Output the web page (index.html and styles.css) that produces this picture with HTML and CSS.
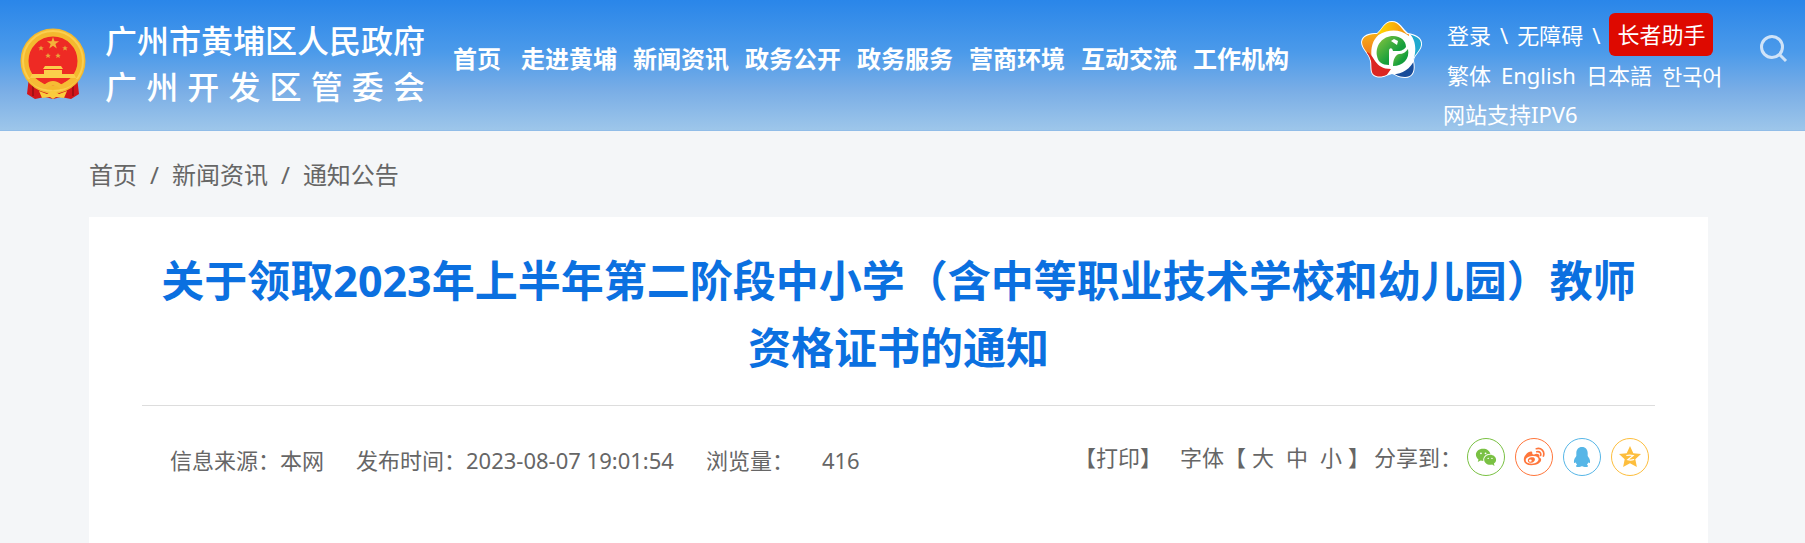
FILE: index.html
```html
<!DOCTYPE html>
<html lang="zh-CN">
<head>
<meta charset="utf-8">
<meta name="viewport" content="width=device-width, initial-scale=1">
<title>关于领取2023年上半年第二阶段中小学（含中等职业技术学校和幼儿园）教师资格证书的通知</title>
<link rel="stylesheet" href="styles.css">
</head>
<body>
<header class="header">
  <a class="brand" href="#">
    <svg class="emblem" viewBox="0 0 66 72" aria-hidden="true">
      <path d="M9 49 L7 66 L15 71 L25 69 L33 71 L41 69 L51 71 L59 66 L57 49Z" fill="#d3151b"/>
      <path d="M13 53v15M53 53v15" stroke="#a50f14" stroke-width="2"/>
      <circle cx="33" cy="33" r="28.500" fill="#ee2a24" stroke="#f4b92f" stroke-width="8"/>
      <circle cx="33" cy="33" r="30" fill="none" stroke="#fbcf4f" stroke-width="2"/>
      <path d="M33 9l1.500 4.300h4.600l-3.700 2.700 1.400 4.400-3.800-2.700-3.800 2.700 1.400-4.400-3.700-2.700h4.600z" fill="#f3b23a"/>
      <path d="M21 17.500l.8 1.800 2 .1-1.500 1.200.6 2-1.900-1.100-1.800 1.100.6-2-1.600-1.200 2-.1zM45 17.500l.8 1.800 2 .1-1.500 1.200.6 2-1.900-1.100-1.800 1.100.6-2-1.600-1.200 2-.1zM28 25l.8 1.800 2 .1-1.500 1.200.6 2-1.900-1.100-1.800 1.100.6-2-1.600-1.200 2-.1zM38 25l.8 1.800 2 .1-1.500 1.200.6 2-1.900-1.100-1.800 1.100.6-2-1.600-1.200 2-.1z" fill="#e9a53a"/>
      <path d="M25 38h16l2 3H23zM24 42h18v4H24zM12 46h42l2 4H10z" fill="#fbce4b"/>
      <path d="M8 51Q18 50 24 57Q33 49 42 57Q48 50 58 51Q51 60 41 61Q33 54 25 61Q15 60 8 51Z" fill="#f6bb35"/>
      <path d="M19 63l8 3 6-4 6 4 8-3-3 7-8-1-3 2-3-2-8 1z" fill="#fbcb3d"/>
    </svg>
    <span class="brand-names">
      <span class="brand-name">广州市黄埔区人民政府</span>
      <span class="brand-name">广州开发区管委会</span>
    </span>
  </a>
  <nav class="nav" aria-label="主导航">
    <a class="nav-home" href="#">首页</a>
    <a href="#">走进黄埔</a>
    <a href="#">新闻资讯</a>
    <a href="#">政务公开</a>
    <a href="#">政务服务</a>
    <a href="#">营商环境</a>
    <a href="#">互动交流</a>
    <a href="#">工作机构</a>
  </nav>
  <div class="tools">
    <svg class="flower" viewBox="0 0 62 58" aria-hidden="true">
      <defs>
        <linearGradient id="leaf" x1="0" y1="0" x2="1" y2="1"><stop offset="0" stop-color="#8cc63f"/><stop offset=".6" stop-color="#18a03c"/><stop offset="1" stop-color="#08943c"/></linearGradient>
        <linearGradient id="gold" x1="0" x2="1"><stop offset="0" stop-color="#ffd900"/><stop offset="1" stop-color="#f58a12"/></linearGradient>
        <linearGradient id="flame" x1="0" y1="0" x2="0" y2="1"><stop offset="0" stop-color="#f7b018"/><stop offset="1" stop-color="#ee6a1d"/></linearGradient>
        <clipPath id="petals"><path d="M31 1C38 1 41 9 46 13C53 14 61 17 60 24C59 31 52 34 52 40C54 49 52 56 44 56C37 56 35 53 31 52C26 53 22 57 15 55C9 53 11 46 10 40C9 33 1 28 1 21C2 14 10 13 16 13C21 9 23 1 31 1Z"/></clipPath>
      </defs>
      <path d="M31 0C39 0 42 8 47 12C54 13 62 16 61 24C60 31 53 34 53 40C55 49 53 57 44 57C37 57 35 54 31 53C26 54 22 58 15 56C8 54 10 46 9 40C8 33 0 28 0 21C1 13 9 12 16 12C21 8 23 0 31 0Z" fill="#fff"/>
      <g clip-path="url(#petals)">
        <path d="M17 14V0H48V15C38 8 29 8 17 14Z" fill="url(#gold)"/>
        <path d="M20 12H0V32L11 40C9 28 11 18 20 12Z" fill="url(#flame)"/>
        <path d="M6 31C14 34 13 48 30 48L23 58H5Z" fill="#dc2622"/>
        <path d="M47 11H62V32L52 40C56 29 55 18 47 11Z" fill="#20a9cf"/>
        <path d="M54 38V58H34L29 53C40 54 49 49 54 38Z" fill="#184c99"/>
      </g>
      <path d="M16 35C14 24 22 15 32 15C40 15 45 20 45 26C41 31 37 30 32 30C31 26 28 27 28 30V44C21 44 17 41 16 35Z" fill="url(#leaf)"/>
      <path d="M47 28C49 38 42 45 32 45C32 39 34 34 38 33C42 33 45 31 47 28Z" fill="url(#leaf)"/>
      <path d="M30 20l3-2 4 2-1 4-3-2z" fill="#fff"/>
    </svg>
    <div class="links">
      <div class="link-row">
        <a href="#">登录</a><span>\</span><a href="#">无障碍</a><span>\</span><a class="elder" href="#">长者助手</a>
      </div>
      <div class="link-row languages">
        <a href="#">繁体</a><a href="#">English</a><a href="#">日本語</a><a class="korean" lang="ko" href="#">한국어</a>
      </div>
      <p class="ipv6">网站支持IPV6</p>
    </div>
    <button class="search" type="button" aria-label="搜索">
      <svg viewBox="0 0 28 28"><circle cx="12" cy="12" r="10.500"/><path d="M19.500 19.500L26 26"/></svg>
    </button>
  </div>
</header>
<div class="page">
  <nav class="crumbs" aria-label="当前位置">
    <a href="#">首页</a><span>/</span><a href="#">新闻资讯</a><span>/</span><a href="#">通知公告</a>
  </nav>
  <main class="card">
    <h1 class="title">关于领取2023年上半年第二阶段中小学（含中等职业技术学校和幼儿园）教师资格证书的通知</h1>
    <div class="meta">
      <div class="facts">
        <span>信息来源：本网</span>
        <span>发布时间：2023-08-07 19:01:54</span>
        <span class="views">浏览量：<span>416</span></span>
      </div>
      <div class="actions">
        <button class="text-button print" type="button">【打印】</button>
        <div class="sizes"><span>字体【</span><div class="size-options"><button type="button">大</button><button type="button">中</button><button type="button">小</button></div><span>】</span></div>
        <span>分享到：</span>
        <div class="share">
          <a class="wechat" href="#" aria-label="微信"><svg viewBox="0 0 24 24"><path d="M9 3C4 3 1 6 1 9.600c0 2 1.100 3.800 2.800 5L3 17.500l3.200-1.600c1 .3 1.900.4 2.900.4C8.500 12 11.500 8.600 16.800 8.500 16 5.300 13 3 9 3z"/><path d="M23 15c0-3-2.900-5.500-6.500-5.500S10 12 10 15s2.900 5.500 6.500 5.500c.8 0 1.500-.1 2.200-.3l2.600 1.500-.7-2.500C22.100 18.200 23 16.700 23 15z"/><g fill="#fff"><circle cx="6.500" cy="8" r="1"/><circle cx="11.500" cy="8" r="1"/><circle cx="14.400" cy="13.500" r=".8"/><circle cx="18.500" cy="13.500" r=".8"/></g></svg></a>
          <a class="weibo" href="#" aria-label="微博"><svg viewBox="0 0 24 24"><path d="M10 8C11 5 6 5.500 3 9.500C-1 14 .5 21 9 21C17 21 21 16.500 19.500 13.800C19 12.800 17.500 13 17.800 11.800C18.500 8.500 15 7.600 12.300 9.200C11 9.700 10.500 9.200 10 8ZM10 11c4.300-.5 7 1.200 7 3.500s-3 4.700-7.200 4.800c-4.300 0-6.800-1.500-6.800-3.700S5.500 11.500 10 11z" fill-rule="evenodd"/><path d="M9 12.300c-2.800.3-4.200 2.300-3.600 4.200.6 1.700 2.900 2.200 5 1.400 2-.8 3.100-2.600 2.500-4.100-.5-1.300-2-1.800-3.900-1.500zm-1.100 5a1.500 1.300 0 1 1 .2-2.600 1.500 1.300 0 0 1-.2 2.600z"/><path d="M14.500 3C20 1.500 24 6 22.300 11M15 6.300c3-.8 5 1.300 4.200 4" fill="none" stroke="currentColor" stroke-width="1.800" stroke-linecap="round"/></svg></a>
          <a class="qq" href="#" aria-label="QQ"><svg viewBox="0 0 24 24"><path d="M12 1C8 1 5.800 4 5.800 7.500V11C4.300 13 3 15.200 3.200 17.500c.1 1.500.9 1.500 2 .1.300 1.100.8 2 1.500 2.800-1.300.5-1.700 1.800-.7 2.300 1.400.6 4.600.3 6-.9 1.400 1.200 4.600 1.500 6 .9 1-.5.600-1.800-.7-2.300.7-.8 1.200-1.700 1.500-2.800 1.100 1.400 1.900 1.400 2-.1.200-2.300-1.100-4.500-2.600-6.500V7.500C18.200 4 16 1 12 1z"/></svg></a>
          <a class="qzone" href="#" aria-label="QQ空间"><svg viewBox="0 0 24 24"><path d="M12 0l3.600 7.800 8.400 1-6.200 5.700 1.700 8.400L12 18.800l-7.500 4.100 1.700-8.400L0 8.800l8.400-1z"/><path d="M8 10.300Q12 9.600 15.500 10.400L9.500 15Q13 15.800 16.500 14.800" fill="none" stroke="#fff" stroke-width="1.200"/></svg></a>
        </div>
      </div>
    </div>
  </main>
</div>
</body>
</html>
```
FILE: styles.css
```css
* { box-sizing: border-box; }

body {
  margin: 0;
  background: #f4f6f8;
  color: #666;
  font-family: "Noto Sans", "Noto Sans CJK SC", sans-serif;
  font-size: 22px;
  line-height: 32px;
}

a { color: inherit; text-decoration: none; }
button { border: 0; padding: 0; background: none; color: inherit; font: inherit; cursor: pointer; }
svg { display: block; }

.header {
  display: flex;
  min-height: 131px;
  padding-left: 20px;
  padding-right: 17px;
  border-bottom: 1px solid #91bde8;
  background: linear-gradient(#2a86e9, #4b9aea 40%, #7aaee6 70%, #9dc6ea);
  color: #fff;
  white-space: nowrap;
}

.brand { display: flex; align-items: flex-start; gap: 19px; padding-top: 18px; }
.emblem { width: 66px; height: 72px; margin-top: 10px; }
.brand-names { display: grid; }
.brand-name {
  font-size: 32px;
  font-weight: 500;
  line-height: 46px;
  text-align-last: justify;
}

.nav {
  display: flex;
  gap: 16px;
  margin-left: 28px;
  padding-top: 41px;
  font-size: 24px;
  font-weight: 700;
  line-height: 36px;
}
.nav-home { margin-right: 4px; }

.tools { display: flex; margin-left: auto; }
.flower { width: 62px; height: 58px; margin-top: 21px; }
.links { width: 292px; margin-left: 20px; padding-top: 13px; }
.link-row { display: flex; align-items: center; gap: 9px; padding-left: 4px; }
.elder { padding: 5px 8px 6px; border-radius: 6px; background: #de0900; }
.languages { gap: 10px; padding-top: 3px; }
.korean { font-family: "Noto Sans CJK KR", sans-serif; }
.ipv6 { margin: 0; padding-top: 7px; }
.search { align-self: flex-start; width: 28px; height: 28px; margin-top: 35px; margin-left: 25px; }
.search svg { width: 28px; height: 28px; fill: none; stroke: #cfe3f8; stroke-width: 3; }

.page { padding: 0 97px 0 89px; }
.crumbs { display: flex; gap: 13px; padding: 26px 0 24px; font-size: 24px; line-height: 36px; }

.card { min-height: 326px; padding: 30px 53px 0; background: #fff; }
.title {
  margin: 0;
  padding-bottom: 24px;
  border-bottom: 1px solid #ddd;
  color: #0b70e0;
  font-size: 43px;
  font-weight: 700;
  line-height: 67px;
  text-align: center;
}

.meta { display: flex; justify-content: space-between; padding: 32px 6px 0 28px; white-space: nowrap; }
.facts { display: flex; gap: 32px; padding-top: 6px; }
.views { display: flex; gap: 28px; }
.actions { display: flex; align-items: center; align-self: flex-start; }
.print { margin-right: 18px; }
.sizes { display: flex; gap: 6px; margin-right: 4px; }
.size-options { display: flex; gap: 12px; }
.share { display: flex; gap: 10px; margin-left: 5px; }
.share a { display: grid; place-items: center; width: 38px; height: 38px; border: 1px solid currentColor; border-radius: 50%; }
.share svg { width: 22px; height: 22px; fill: currentColor; }
.wechat { color: #7ac143; }
.weibo { color: #ff763b; }
.qq { color: #56b6e7; }
.qzone { color: #fdbe3d; }
```
